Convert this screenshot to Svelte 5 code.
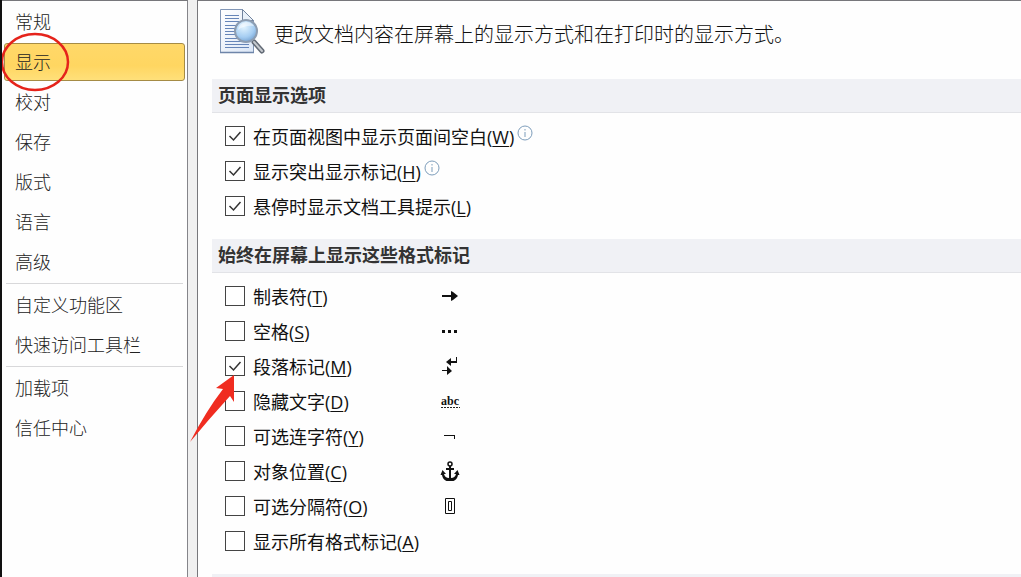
<script>
    let current = $state("显示");

    const groups = [
        ["常规", "显示", "校对", "保存", "版式", "语言", "高级"],
        ["自定义功能区", "快速访问工具栏"],
        ["加载项", "信任中心"],
    ];

    let pageOptions = $state([
        { id: "whitespace", label: "在页面视图中显示页面间空白", key: "W", checked: true, info: true },
        { id: "highlight", label: "显示突出显示标记", key: "H", checked: true, info: true },
        { id: "tooltips", label: "悬停时显示文档工具提示", key: "L", checked: true },
    ]);

    let markOptions = $state([
        { id: "tabs", label: "制表符", key: "T", checked: false, icon: "tab" },
        { id: "spaces", label: "空格", key: "S", checked: false, icon: "space" },
        { id: "paragraph", label: "段落标记", key: "M", checked: true, icon: "paragraph", arrow: true },
        { id: "hidden", label: "隐藏文字", key: "D", checked: false, icon: "hidden" },
        { id: "hyphens", label: "可选连字符", key: "Y", checked: false, icon: "hyphen" },
        { id: "anchors", label: "对象位置", key: "C", checked: false, icon: "anchor" },
        { id: "breaks", label: "可选分隔符", key: "O", checked: false, icon: "break" },
        { id: "all", label: "显示所有格式标记", key: "A", checked: false },
    ]);
</script>

{#snippet mark(name)}
    <svg class="mark" viewBox="0 0 20 20" aria-hidden="true">
        {#if name === "tab"}
            <path d="M2 9h9V5l2 1 5 4-5 4-2 1v-4H2z" />
        {:else if name === "space"}
            <path d="M2 9h3v3H2zM8 9h3v3H8zM14 9h3v3h-3z" />
        {:else if name === "paragraph"}
            <path d="M6 6l5-4v3h5V1h1v6h-6v3zM2 14h5v-4l5 5-5 4v-4H2z" />
        {:else if name === "hidden"}
            <text x="1" y="14">abc</text>
            <path d="M1 16.500h19" fill="none" stroke="#222" stroke-dasharray="2 1" />
        {:else if name === "hyphen"}
            <path d="M4 9h11v4h-1v-3H4z" />
        {:else if name === "anchor"}
            <circle cx="10" cy="3" r="2" fill="none" stroke="#111" stroke-width="1.500" />
            <path d="M9 5h2v2h3v2h-3v8q4 0 5-4h-2l3.500-4 2 5h-1.500q-1 6-8 7-7-1-8-7H.5l2-5L6 13H4q1 4 5 4V9H6V7h3z" />
        {:else if name === "break"}
            <path d="M5.500 2.500h9v15h-9zM8.500 5.500h3v9h-3z" fill="none" stroke="#111" />
        {/if}
    </svg>
{/snippet}

{#snippet option(item)}
    <div class="option">
        <span class="box">
            <input type="checkbox" id={item.id} bind:checked={item.checked} />
            <svg class="tick" viewBox="0 0 20 20" aria-hidden="true">
                <polyline points="4.500,10 8.500,14 15.500,6" />
            </svg>
            {#if item.arrow}
                <svg class="arrow" viewBox="0 0 48 70" aria-hidden="true">
                    <path d="M45 1 27 14l7 1Q17 37 1 68 20 45 41 22l4 6z" />
                </svg>
            {/if}
        </span>
        <label for={item.id}>{item.label}(<u>{item.key}</u>)</label>
        {#if item.info}
            <svg class="info" viewBox="0 0 16 16" aria-hidden="true">
                <circle cx="8" cy="8" r="7" />
                <path d="M8 7v5M8 4v1.500" />
            </svg>
        {/if}
        {#if item.icon}
            {@render mark(item.icon)}
        {/if}
    </div>
{/snippet}

<div class="dialog">
    <nav>
        {#each groups as group, i}
            {#if i > 0}
                <hr />
            {/if}
            {#each group as name}
                <button
                    type="button"
                    class:active={current === name}
                    onclick={() => (current = name)}
                >
                    {name}
                    {#if name === "显示"}
                        <svg class="ring" viewBox="0 0 70 60" aria-hidden="true">
                            <ellipse cx="35" cy="30" rx="33" ry="28" />
                        </svg>
                    {/if}
                </button>
            {/each}
        {/each}
    </nav>

    <main>
        <header>
            <svg class="page" viewBox="0 0 48 48" aria-hidden="true">
                <defs>
                    <linearGradient id="paper" x1="0" y1="0" x2="1" y2="1">
                        <stop offset="0" stop-color="#fff" />
                        <stop offset="1" stop-color="#dbe6f6" />
                    </linearGradient>
                    <radialGradient id="lens" cx="0.4" cy="0.3" r="0.8">
                        <stop offset="0" stop-color="#e4f5ff" />
                        <stop offset="0.6" stop-color="#a5cdf2" />
                        <stop offset="1" stop-color="#6796c8" />
                    </radialGradient>
                </defs>
                <path d="M2.500 1.500h22l11 11v32h-33z" fill="url(#paper)" stroke="#8196b6" />
                <path d="M2 44.500h34" stroke="#6e85a9" stroke-width="1.500" />
                <path d="M24.500 1.500v11h11z" fill="#e9f1fa" stroke="#71839e" />
                <path
                    d="M7 7.500h14M7 10.500h14M7 13.500h14M7 17.500h12M7 20.500h12M7 23.500h12M7 26.500h12M7 30.500h14M7 33.500h18M7 36.500h24M7 39.500h24"
                    stroke="#6685b8"
                />
                <path d="M36 34l8 9" stroke="#626a75" stroke-width="5" stroke-linecap="round" />
                <path d="M36 34l8 9" stroke="#c5c9ce" stroke-width="2" stroke-linecap="round" />
                <circle cx="28" cy="23" r="11" fill="url(#lens)" stroke="#8d9db1" stroke-width="2" />
                <path d="M20 22q1-7 8-8 5 0 8 4-9-1-16 4z" fill="#fff" opacity="0.5" />
            </svg>
            <p>更改文档内容在屏幕上的显示方式和在打印时的显示方式。</p>
        </header>

        <h2>页面显示选项</h2>
        <section>
            {#each pageOptions as item}
                {@render option(item)}
            {/each}
        </section>

        <h2>始终在屏幕上显示这些格式标记</h2>
        <section>
            {#each markOptions as item}
                {@render option(item)}
            {/each}
        </section>

        <div class="next"></div>
    </main>
</div>

<style>
    :global(body) {
        background: #f0f0f0;
    }
    .dialog {
        box-sizing: border-box;
        display: flex;
        gap: 9px;
        height: 100vh;
        overflow: hidden;
        border-left: 2px solid #111;
        font-family: "Open Sans", "Noto Sans CJK SC", sans-serif;
        font-size: 18px;
        font-weight: 300;
        color: #111;
    }
    nav {
        box-sizing: border-box;
        flex: none;
        width: 186px;
        display: flex;
        flex-direction: column;
        gap: 2px;
        padding: 2px 2px 0;
        background: #fefefe;
        border-top: 1px solid #77777b;
        border-right: 1px solid #85858a;
    }
    nav button {
        position: relative;
        flex: none;
        height: 38px;
        padding: 0 10px 2px;
        border: 1px solid transparent;
        border-radius: 3px;
        background: none;
        font: inherit;
        color: #222;
        text-align: left;
        cursor: pointer;
    }
    nav button.active {
        border-color: #a58b45;
        background: linear-gradient(#ffd869, #ffd661 60%, #ffe07a);
    }
    hr {
        flex: none;
        width: 177px;
        height: 1px;
        margin: 0 auto;
        border: 0;
        background: #d8d8da;
    }
    /* hand-drawn circle round the chosen page */
    .ring {
        position: absolute;
        z-index: 1;
        left: -5px;
        top: -12px;
        width: 70px;
        height: 60px;
        fill: none;
        stroke: #e5231b;
        stroke-width: 2.5;
        pointer-events: none;
    }
    main {
        flex: 1;
        min-width: 0;
        display: flex;
        flex-direction: column;
        padding-left: 14px;
        background: #fefefe;
        border-top: 1px solid #77777b;
        border-left: 1px solid #77777b;
    }
    header {
        flex: none;
        display: flex;
        align-items: center;
        gap: 8px;
        height: 62px;
        padding: 0 0 16px 6px;
        font-size: 20px;
    }
    header p {
        margin: 2px 0 0;
    }
    .page {
        flex: none;
        width: 48px;
        height: 48px;
    }
    h2 {
        flex: none;
        margin: 0;
        padding: 0 6px;
        border-bottom: 1px solid #e2e3e7;
        background: #f0f1f5;
        font-size: 18px;
        font-weight: 700;
        line-height: 33px;
        color: #333;
    }
    section {
        flex: none;
        padding: 5px 0 16px 13px;
    }
    .option {
        display: grid;
        grid-template-columns: 20px auto 1fr;
        align-items: center;
        height: 35px;
        column-gap: 8px;
        position: relative;
        font-weight: 400;
    }
    .box {
        position: relative;
        display: grid;
    }
    .box input,
    .tick {
        grid-area: 1 / 1;
        width: 20px;
        height: 20px;
    }
    .box input {
        appearance: none;
        margin: 0;
        border: 1px solid #444;
        background: #fff;
    }
    .tick {
        fill: none;
        stroke: #333;
        stroke-width: 1.5;
        visibility: hidden;
        pointer-events: none;
    }
    .box input:checked + .tick {
        visibility: visible;
    }
    .arrow {
        position: absolute;
        z-index: 1;
        left: -36px;
        top: 18px;
        width: 48px;
        height: 70px;
        fill: #f02c20;
        pointer-events: none;
    }
    u {
        text-underline-offset: 2px;
        text-decoration-thickness: 1px;
    }
    .info {
        width: 16px;
        height: 16px;
        margin: 0 0 6px -5px;
        fill: none;
        stroke: #7d9dbb;
    }
    .mark {
        position: absolute;
        left: 215px;
        width: 20px;
        height: 20px;
        fill: #111;
    }
    .mark text {
        font-family: "Liberation Serif", serif;
        font-size: 12px;
        font-weight: 700;
    }
    .next {
        flex: none;
        height: 33px;
        background: #f0f1f5;
    }
</style>
